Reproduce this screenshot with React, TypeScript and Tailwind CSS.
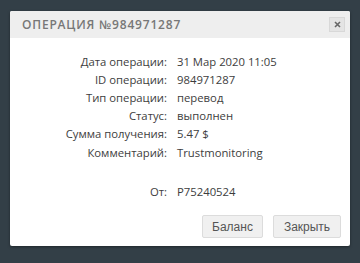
export default function App() {
  const rows: [string, string][] = [
    ["Дата операции:", "31 Мар 2020 11:05"],
    ["ID операции:", "984971287"],
    ["Тип операции:", "перевод"],
    ["Статус:", "выполнен"],
    ["Сумма получения:", "5.47 $"],
    ["Комментарий:", "Trustmonitoring"],
  ];

  return (
    <div className="w-[360px] h-[263px] bg-[#333f47] pt-[11px] pl-[10px]">
      <div className="w-[340px] h-[235px] bg-white rounded-[2px] flex flex-col shadow-[0_1px_3px_rgba(0,0,0,0.4)]">
        <div className="h-[27px] bg-[#eeeeee] flex items-center justify-between pl-[12px] pr-[5px] rounded-t-[2px]">
          <span className="text-[12px] font-semibold tracking-[0.8px] text-[#777] font-['Open_Sans',sans-serif]">
            ОПЕРАЦИЯ №984971287
          </span>
          <button className="w-[16px] h-[15px] bg-[#e4e4e4] border border-[#d8d8d8] flex items-center justify-center">
            <svg width="7" height="7" viewBox="0 0 7 7">
              <path d="M1 1L6 6M6 1L1 6" stroke="#666" strokeWidth="1.6" />
            </svg>
          </button>
        </div>
        <div className="flex-1 pt-[15px] font-['Open_Sans',sans-serif] text-[11.3px] text-[#3d3d3d]">
          {rows.map(([k, v]) => (
            <div key={k} className="flex h-[18.2px] items-center">
              <div className="w-[157px] text-right">{k}</div>
              <div className="pl-[10px]">{v}</div>
            </div>
          ))}
          <div className="flex h-[18px] items-center mt-[21px]">
            <div className="w-[157px] text-right">От:</div>
            <div className="pl-[10px]">P75240524</div>
          </div>
        </div>
        <div className="flex justify-end gap-[10px] pr-[9px] pb-[8px] font-['Liberation_Sans',sans-serif] text-[12px] text-[#555]">
          <button className="w-[61px] h-[23px] bg-[#f0f0f0] border border-[#dcdcdc] rounded-[2px]">Баланс</button>
          <button className="w-[68px] h-[23px] bg-[#f0f0f0] border border-[#dcdcdc] rounded-[2px]">Закрыть</button>
        </div>
      </div>
    </div>
  );
}
